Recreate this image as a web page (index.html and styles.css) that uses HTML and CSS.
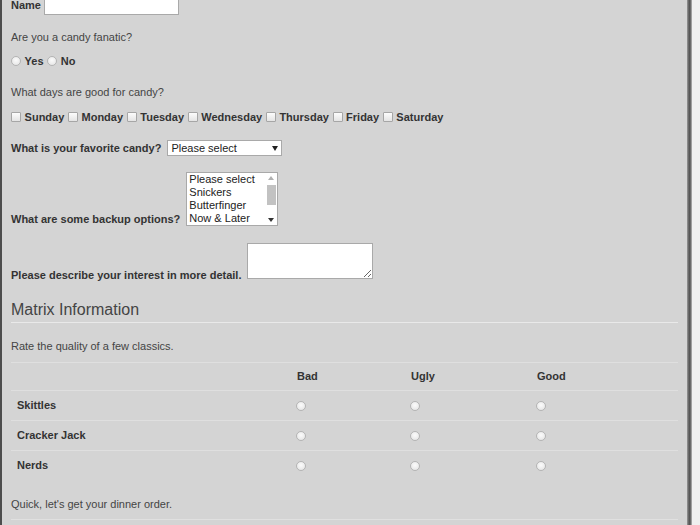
FILE: index.html
```html
<!DOCTYPE html>
<html lang="en">
<head>
<meta charset="utf-8">
<title>Candy Survey</title>
<link rel="stylesheet" href="styles.css">
</head>
<body>
<div class="frame">
  <main class="page">
    <form class="survey">
      <div class="row row-name">
        <label class="label" for="name">Name</label>
        <input class="text-input" id="name" type="text">
      </div>

      <p class="question q-fanatic">Are you a candy fanatic?</p>
      <div class="choices">
        <input class="radio" type="radio" name="fanatic" id="yes"><label class="label" for="yes">Yes</label>
        <input class="radio" type="radio" name="fanatic" id="no"><label class="label" for="no">No</label>
      </div>

      <p class="question q-days">What days are good for candy?</p>
      <div class="choices days">
        <input class="check" type="checkbox" id="d1"><label class="label" for="d1">Sunday</label>
        <input class="check" type="checkbox" id="d2"><label class="label" for="d2">Monday</label>
        <input class="check" type="checkbox" id="d3"><label class="label" for="d3">Tuesday</label>
        <input class="check" type="checkbox" id="d4"><label class="label" for="d4">Wednesday</label>
        <input class="check" type="checkbox" id="d5"><label class="label" for="d5">Thursday</label>
        <input class="check" type="checkbox" id="d6"><label class="label" for="d6">Friday</label>
        <input class="check" type="checkbox" id="d7"><label class="label" for="d7">Saturday</label>
      </div>

      <div class="row row-select">
        <label class="label" for="fav">What is your favorite candy?</label>
        <span class="select-wrap">
          <select class="select" id="fav">
            <option>Please select</option>
            <option>Snickers</option>
            <option>Butterfinger</option>
            <option>Now &amp; Later</option>
          </select>
        </span>
      </div>

      <div class="row row-list">
        <span class="label">What are some backup options?</span>
        <div class="listbox" role="listbox">
          <ul class="options">
            <li>Please select</li>
            <li>Snickers</li>
            <li>Butterfinger</li>
            <li>Now &amp; Later</li>
          </ul>
          <div class="scrollbar">
            <span class="arrow-up"></span>
            <span class="thumb"></span>
            <span class="spacer"></span>
            <span class="arrow-down"></span>
          </div>
        </div>
      </div>

      <div class="row row-area">
        <label class="label label-area" for="detail">Please describe your interest in more detail.</label>
        <textarea class="textarea" id="detail"></textarea>
      </div>

      <h2 class="section-title">Matrix Information</h2>
      <p class="question q-rate">Rate the quality of a few classics.</p>

      <table class="matrix">
        <colgroup>
          <col class="c-name"><col class="c-bad"><col class="c-ugly"><col class="c-good">
        </colgroup>
        <thead>
          <tr><th></th><th>Bad</th><th>Ugly</th><th>Good</th></tr>
        </thead>
        <tbody>
          <tr><th>Skittles</th><td><input class="radio" type="radio" name="r1"></td><td><input class="radio" type="radio" name="r1"></td><td><input class="radio" type="radio" name="r1"></td></tr>
          <tr><th>Cracker Jack</th><td><input class="radio" type="radio" name="r2"></td><td><input class="radio" type="radio" name="r2"></td><td><input class="radio" type="radio" name="r2"></td></tr>
          <tr><th>Nerds</th><td><input class="radio" type="radio" name="r3"></td><td><input class="radio" type="radio" name="r3"></td><td><input class="radio" type="radio" name="r3"></td></tr>
        </tbody>
      </table>

      <p class="question q-dinner">Quick, let's get your dinner order.</p>
    </form>
  </main>
  <div class="edge"></div>
</div>
</body>
</html>
```
FILE: styles.css
```css
html, body {
  margin: 0;
  padding: 0;
  height: 100%;
  background: #efefef;
  overflow: hidden;
}

.frame {
  display: flex;
  height: 525px;
}

.page {
  flex: 0 0 687px;
  box-sizing: border-box;
  background: #d4d4d4;
  border-left: 2px solid #4d4d4d;
  padding: 0 9px;
  font: 11px/14px "Liberation Sans", Arial, sans-serif;
  color: #333;
  overflow: hidden;
}

.edge {
  flex: 0 0 5px;
  background: linear-gradient(to right, #9a9a9a, #505050 45%, #6a6a6a 70%, #b8b8b8);
}

.survey {
  margin: 0;
}

.label {
  font-weight: bold;
  color: #333;
  white-space: nowrap;
}

.row {
  display: flex;
  gap: 3px;
}

.row-name {
  align-items: center;
  height: 20px;
  margin-top: -5px;
}

.text-input {
  width: 135px;
  height: 20px;
  box-sizing: border-box;
  margin: 0;
  padding: 0 3px;
  border: 1px solid #a9a9a9;
  background: #fff;
}

.question {
  margin: 0;
  line-height: 14px;
  color: #444;
}

.q-fanatic { margin-top: 15px; }
.q-days { margin-top: 17px; }
.q-rate { margin-top: 16px; }

.choices {
  display: flex;
  align-items: center;
  gap: 3.6px;
  height: 14px;
  margin-top: 10px;
}

.choices.days {
  margin-top: 11px;
}

.radio,
.check {
  -webkit-appearance: none;
  appearance: none;
  margin: 0;
  width: 10px;
  height: 10px;
  box-sizing: border-box;
  flex: 0 0 auto;
}

.radio {
  border: 1px solid #b4b4b4;
  border-radius: 50%;
  background: radial-gradient(circle at 50% 40%, #fbfbfb, #e2e2e2);
}

.check {
  border: 1px solid #a6a6a6;
  border-radius: 1px;
  background: linear-gradient(#fcfcfc, #e4e4e4);
}

.row-select {
  align-items: center;
  height: 16px;
  margin-top: 16px;
  gap: 6px;
}

.select-wrap {
  position: relative;
  display: block;
  width: 115px;
  height: 16px;
}

.select-wrap::after {
  content: "";
  position: absolute;
  right: 4px;
  top: 6px;
  border-left: 3px solid transparent;
  border-right: 3px solid transparent;
  border-top: 5px solid #222;
  pointer-events: none;
}

.select {
  -webkit-appearance: none;
  appearance: none;
  display: block;
  width: 115px;
  height: 16px;
  box-sizing: border-box;
  margin: 0;
  padding: 0 0 0 3px;
  border: 1px solid #a9a9a9;
  border-radius: 0;
  background: #fff;
  font: 11px/14px "Liberation Sans", Arial, sans-serif;
  color: #222;
}

.row-list {
  align-items: flex-end;
  margin-top: 16px;
  gap: 6px;
}

.listbox {
  display: flex;
  width: 92px;
  height: 54px;
  box-sizing: border-box;
  border: 1px solid #a9a9a9;
  background: #fff;
}

.options {
  flex: 1;
  list-style: none;
  margin: 0;
  padding: 0 0 0 2px;
  font-size: 11px;
  line-height: 13px;
  color: #222;
  white-space: nowrap;
  overflow: hidden;
}

.scrollbar {
  flex: 0 0 12px;
  display: flex;
  flex-direction: column;
  align-items: center;
  padding: 3px 0 3px;
  box-sizing: border-box;
}

.arrow-up {
  border-left: 3px solid transparent;
  border-right: 3px solid transparent;
  border-bottom: 4px solid #b0b0b0;
}

.thumb {
  width: 9px;
  height: 20px;
  margin-top: 5px;
  background: #c2c2c2;
}

.spacer {
  flex: 1;
}

.arrow-down {
  border-left: 3px solid transparent;
  border-right: 3px solid transparent;
  border-top: 4px solid #333;
}

.row-area {
  align-items: flex-end;
  margin-top: 17px;
  gap: 6px;
}

.label-area {
  margin-bottom: -3px;
}

.textarea {
  width: 126px;
  height: 36px;
  box-sizing: border-box;
  margin: 0;
  padding: 2px;
  border: 1px solid #a9a9a9;
  background: #fff;
  font: 11px "Liberation Sans", Arial, sans-serif;
}

.section-title {
  margin: 21px 0 0;
  padding-bottom: 2px;
  border-bottom: 1px solid #e9e9e9;
  font: normal 16px/20px "Liberation Sans", Arial, sans-serif;
  color: #444;
}

.matrix {
  width: 667px;
  margin-top: 9px;
  table-layout: fixed;
  border-collapse: separate;
  border-spacing: 0;
}

.c-name { width: 280px; }
.c-bad { width: 114px; }
.c-ugly { width: 126px; }
.c-good { width: 147px; }

.matrix th,
.matrix td {
  padding: 0 6px;
  text-align: left;
  vertical-align: middle;
  border-top: 1px solid #dfdfdf;
  font-weight: bold;
  color: #333;
}

.matrix thead th {
  line-height: 27px;
}

.matrix tbody th,
.matrix tbody td {
  line-height: 29px;
}

.matrix td .radio {
  vertical-align: middle;
  margin-left: -1px;
}

.q-dinner {
  margin-top: 17px;
  padding-bottom: 8px;
  border-bottom: 1px solid #e0e0e0;
}
```
